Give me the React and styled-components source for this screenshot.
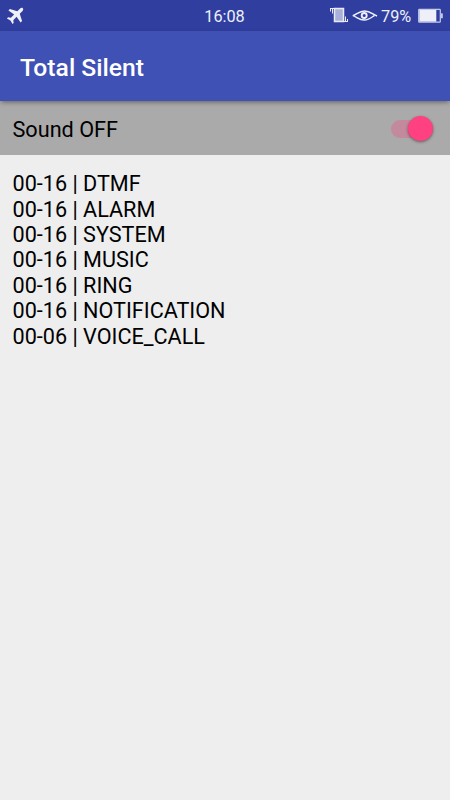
import React, { useState } from "react";
import styled, { createGlobalStyle } from "styled-components";

const STREAMS = [
  { range: "00-16", name: "DTMF" },
  { range: "00-16", name: "ALARM" },
  { range: "00-16", name: "SYSTEM" },
  { range: "00-16", name: "MUSIC" },
  { range: "00-16", name: "RING" },
  { range: "00-16", name: "NOTIFICATION" },
  { range: "00-06", name: "VOICE_CALL" },
];

const PlaneIcon = () => (
  <svg width="26" height="31" viewBox="0 0 26 31">
    <path
      transform="translate(16.1 14.9) rotate(45) scale(0.86) translate(-12 -12)"
      fill="#eef0fa"
      d="M22 14.6v-2.4L14 8V3.4C14 2.2 13.1 1 12 1s-2 1.2-2 2.4V8L2 12.2v2.4l8-1.4v5.4l-2.6 2v1.9l4.6-1.2 4.6 1.2v-1.9l-2.6-2v-5.4l8 1.4z"
    />
  </svg>
);

const VibrateIcon = () => (
  <svg width="20" height="31" viewBox="0 0 20 31" fill="none" stroke="#e8eaf6">
    <rect x="5.5" y="8.5" width="9" height="13" fill="#a9b0d9" strokeWidth="1.5" />
    <path d="M1.5 8v3.5M3.5 8v5.5" />
    <path d="M16.5 16.5V22M18.5 19v3" />
    <path d="M1.5 8.5h4M14.5 21.5h4" />
  </svg>
);

const EyeIcon = () => (
  <svg width="26" height="31" viewBox="0 0 26 31" fill="none" stroke="#eef0fa">
    <path d="M.7 15.7C4.5 14.8 7 11 12.5 11c5.3 0 8 3.2 12.5 5.1" strokeWidth="1.6" />
    <path d="M1.5 15.9C5 17.2 7.4 20 12.3 20c4.6 0 7-2.4 10.2-4.6" strokeWidth="1.4" />
    <circle cx="12.2" cy="15.5" r="2.5" strokeWidth="1.9" />
  </svg>
);

const BatteryIcon = () => (
  <svg width="25" height="31" viewBox="0 0 25 31">
    <rect x=".7" y="9.4" width="21.6" height="12.8" rx=".6" fill="none" stroke="#c5cae9" strokeWidth="1.2" />
    <rect x="1.3" y="10" width="17" height="11.6" fill="#eeeff8" />
    <rect x="22.8" y="13.4" width="2" height="4.8" fill="#c5cae9" />
  </svg>
);

const App = () => {
  const [silent, setSilent] = useState(true);

  return (
    <>
      <GlobalStyle />
      <Screen>
        <StatusBar>
          <StatusGroup>
            <PlaneIcon />
          </StatusGroup>
          <Clock>16:08</Clock>
          <StatusGroup $end>
            <VibrateIcon />
            <EyeSlot>
              <EyeIcon />
            </EyeSlot>
            <Percent>79%</Percent>
            <BatteryIcon />
          </StatusGroup>
        </StatusBar>
        <Toolbar>
          <Title>Total Silent</Title>
        </Toolbar>
        <SoundRow>
          <SoundLabel>{silent ? "Sound OFF" : "Sound ON"}</SoundLabel>
          <Switch role="switch" aria-checked={silent} $on={silent} onClick={() => setSilent(!silent)}>
            <Thumb $on={silent} />
          </Switch>
        </SoundRow>
        <StreamList>
          {STREAMS.map(({ range, name }) => (
            <Stream key={name}>
              {range} | {name}
            </Stream>
          ))}
        </StreamList>
      </Screen>
    </>
  );
};

const GlobalStyle = createGlobalStyle`
  body {
    margin: 0;
    background: #eeeeee;
  }
`;
const Screen = styled.div`
  display: flex;
  flex-direction: column;
  height: 100vh;
  overflow: hidden;
  background: #eeeeee;
  color: #000;
  font-family: Roboto, sans-serif;
`;
const StatusBar = styled.div`
  display: grid;
  grid-template-columns: 1fr auto 1fr;
  align-items: center;
  flex: none;
  height: 31px;
  padding-right: 7px;
  background: #303f9f;
  color: #eef0fa;
`;
const StatusGroup = styled.div`
  display: flex;
  align-items: center;
  justify-content: ${({ $end }) => ($end ? "flex-end" : "flex-start")};
  height: 31px;
`;
const EyeSlot = styled.span`
  display: flex;
  margin-left: 3px;
`;
const Clock = styled.span`
  padding: 2px 0 0 6px;
  font-size: 16.25px;
  line-height: 20px;
`;
const Percent = styled.span`
  box-sizing: border-box;
  width: 40px;
  padding: 2px 0 0 3px;
  font-size: 16.25px;
  line-height: 20px;
`;
const Toolbar = styled.header`
  position: relative;
  z-index: 1;
  display: flex;
  align-items: center;
  flex: none;
  height: 70px;
  padding: 3px 20px 0;
  box-sizing: border-box;
  background: #3f51b5;
  box-shadow: 0 2px 5px -1px rgba(0, 0, 0, 0.45);
`;
const Title = styled.h1`
  margin: 0;
  color: #fff;
  font-size: 24.7px;
  font-weight: 500;
  line-height: 30px;
`;
const SoundRow = styled.div`
  display: flex;
  align-items: center;
  justify-content: space-between;
  flex: none;
  height: 54px;
  padding: 0 17px 0 12.5px;
  background: #aaaaaa;
`;
const SoundLabel = styled.span`
  padding-top: 4px;
  font-size: 21.67px;
  line-height: 26px;
`;
const Switch = styled.button`
  display: flex;
  align-items: center;
  justify-content: ${({ $on }) => ($on ? "flex-end" : "flex-start")};
  width: 42px;
  height: 18px;
  margin-top: 1px;
  padding: 0;
  border: 0;
  border-radius: 9px;
  background: ${({ $on }) => ($on ? "rgba(255, 64, 129, 0.3)" : "rgba(0, 0, 0, 0.26)")};
`;
const Thumb = styled.span`
  width: 25px;
  height: 25px;
  border-radius: 50%;
  background: ${({ $on }) => ($on ? "#ff4081" : "#fafafa")};
  box-shadow: 0 1px 3px rgba(0, 0, 0, 0.45);
`;
const StreamList = styled.ul`
  margin: 0;
  padding: 16.2px 12.5px;
  list-style: none;
`;
const Stream = styled.li`
  font-size: 21.62px;
  line-height: 25.4px;
`;

export default App;
